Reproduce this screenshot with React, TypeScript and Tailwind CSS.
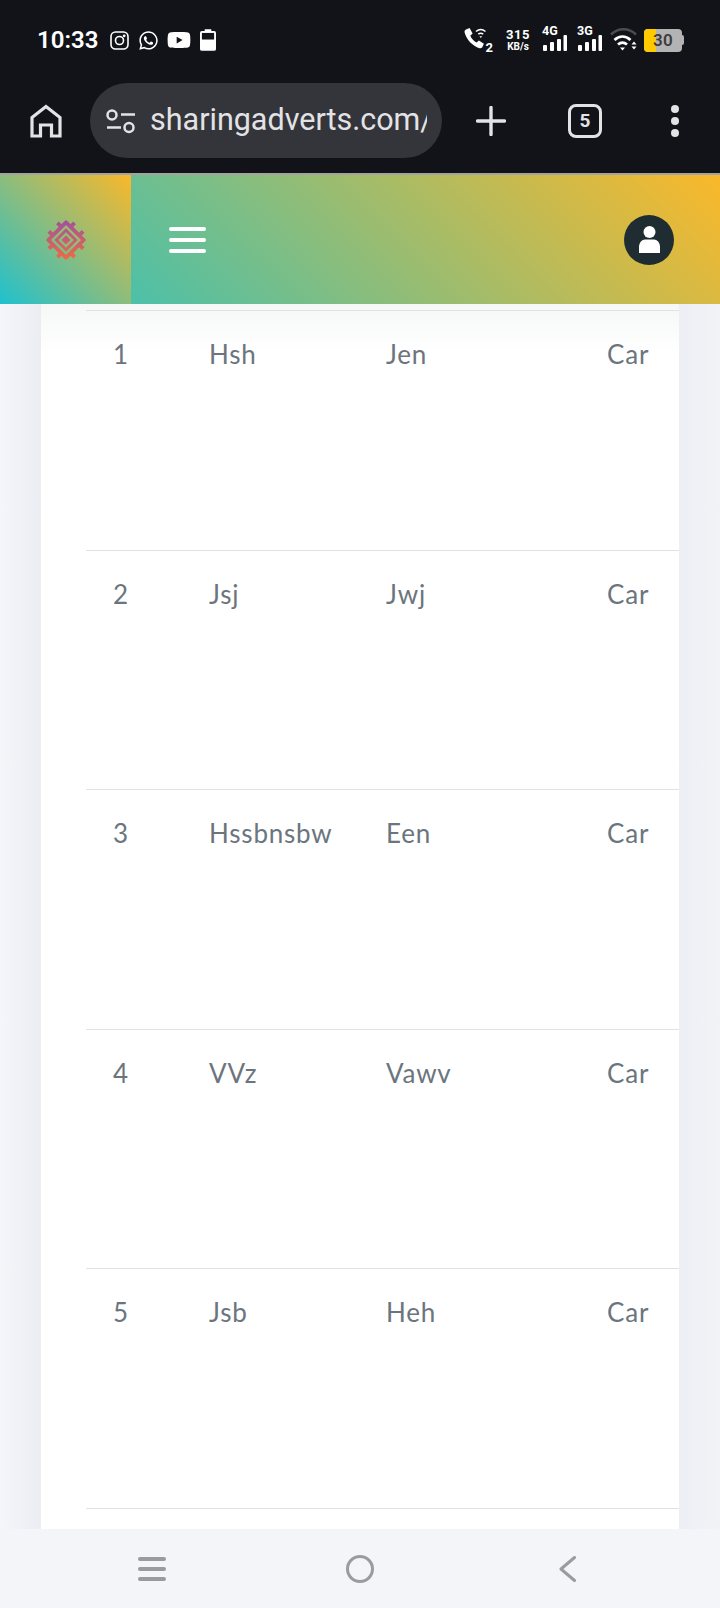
import React from "react";
import { FaWhatsapp, FaYoutube } from "react-icons/fa";

const rows = [
  ["1", "Hsh", "Jen", "Car"],
  ["2", "Jsj", "Jwj", "Car"],
  ["3", "Hssbnsbw", "Een", "Car"],
  ["4", "VVz", "Vawv", "Car"],
  ["5", "Jsb", "Heh", "Car"],
];

function Bars({ label }: { label: string }) {
  return (
    <div className="relative w-[26px] h-[24px]">
      <span className="absolute left-0 top-[-3px] text-[12.5px] leading-[12px] font-bold text-white">{label}</span>
      <svg className="absolute left-0 top-0" width="26" height="24" viewBox="0 0 26 24" fill="#fff">
        <rect x="1" y="17" width="4" height="6" rx="1" />
        <rect x="8" y="14" width="4" height="9" rx="1" />
        <rect x="15" y="11" width="4" height="12" rx="1" />
        <rect x="21.500" y="7" width="3.500" height="16" rx="1" />
      </svg>
    </div>
  );
}

export default function App() {
  return (
    <div className="w-[720px] h-[1608px] flex flex-col overflow-hidden bg-[#f1f3f8] font-['Roboto',sans-serif]">
      <div className="bg-[#111318] h-[173px] shrink-0 flex flex-col">
        <div className="h-[83px] shrink-0 flex items-center justify-between pl-[37px] pr-[36px] pb-[3px]">
          <div className="flex items-center">
            <span className="text-white text-[24px] font-semibold leading-none">10:33</span>
            <svg className="ml-[12px]" width="19" height="19" viewBox="0 0 19 19" fill="none" stroke="#fff" strokeWidth="1.6">
              <rect x="1" y="1" width="17" height="17" rx="4.5" />
              <circle cx="9.5" cy="9.5" r="4" />
              <circle cx="14.2" cy="4.8" r="0.6" fill="#fff" />
            </svg>
            <FaWhatsapp className="ml-[9px] text-white" size={21} />
            <FaYoutube className="ml-[8px] text-white" size={24} />
            <svg className="ml-[9px]" width="16" height="22" viewBox="0 0 17 23">
              <path d="M5 0h7v2h3a2 2 0 0 1 2 2v17a2 2 0 0 1-2 2H2a2 2 0 0 1-2-2V4a2 2 0 0 1 2-2h3z" fill="#fff" />
              <rect x="2" y="4" width="13" height="7" fill="#111318" />
            </svg>
          </div>
          <div className="flex items-center">
            <svg width="30" height="26" viewBox="0 0 30 26" fill="none">
              <path d="M3 2.500l3.600-1.500 3 5.500-2.300 2.300c1 2.600 3.400 5.400 6.300 6.800l2.300-2.100 5 3.200-1.600 3.600c-.6.900-1.700 1.200-2.800.9C9.500 19 3.400 12.500 1.600 5.500c-.3-1.200.3-2.400 1.400-3z" fill="#fff" />
              <path d="M13 4.500c3-2.600 6.500-2.600 9.500 0M15.300 7.200c1.600-1.300 3.300-1.300 4.900 0" stroke="#fff" strokeWidth="1.500" />
              <path d="M16.400 9.200h2.800l-1.400 1.800z" fill="#fff" />
            </svg>
            <span className="text-white text-[13px] font-bold leading-none self-end -ml-[7px] mb-[-1px]">2</span>
            <div className="ml-[12px] w-[26px] flex flex-col items-center text-white font-bold">
              <span className="text-[13px] leading-[13px] tracking-[0.5px]">315</span>
              <span className="text-[10px] leading-[12px]">KB/s</span>
            </div>
            <div className="ml-[11px]"><Bars label="4G" /></div>
            <div className="ml-[9px]"><Bars label="3G" /></div>
            <svg className="ml-[7px]" width="28" height="26" viewBox="0 0 28 26" fill="none">
              <path d="M1 7.500C8 .5 19 .5 26 7.500" stroke="#4a4c50" strokeWidth="2.500" />
              <path d="M4.500 13c5-4.500 11-4.500 16 0M8 17.500c3-2.500 6-2.500 9 0" stroke="#fff" strokeWidth="2.800" />
              <path d="M10 20.500h5l-2.500 3z" fill="#fff" />
              <path d="M21.500 17.500l2.500-3 2.500 3zM21.500 19.500h5l-2.500 3z" fill="#fff" />
            </svg>
            <div className="ml-[6px] relative w-[38px] h-[23px] rounded-[4px] bg-[#b3b3b3] overflow-hidden flex items-center">
              <div className="w-[12px] h-full bg-[#ffc900]" />
              <span className="absolute left-[9px] text-[17px] font-semibold text-[#3d3d3d] leading-none tracking-[0.3px]">30</span>
            </div>
            <div className="w-[2px] h-[10px] bg-[#b3b3b3] rounded-r-[2px]" />
          </div>
        </div>
        <div className="h-[75px] shrink-0 flex items-center pl-[30px]">
          <svg width="32" height="34" viewBox="0 0 32 34" fill="none" stroke="#e3e3e6" strokeWidth="3.200">
            <path d="M2 32V13.500L16 2.500l14 11V32H21.500V21h-11v11z" strokeLinejoin="miter" />
          </svg>
          <div className="ml-[28px] w-[352px] h-[75px] rounded-full bg-[#34353a] flex items-center pl-[16px] pr-[15px]">
            <svg className="shrink-0" width="29" height="26" viewBox="0 0 29 26" fill="none" stroke="#e3e3e6" strokeWidth="2.500">
              <circle cx="6" cy="7" r="4.500" />
              <path d="M15 6.500h14M1 19.500h14" />
              <circle cx="23" cy="19.500" r="4.500" />
            </svg>
            <div className="ml-[15px] overflow-hidden whitespace-nowrap text-[#e3e3e6] text-[30.5px] leading-none">sharingadverts.com/</div>
          </div>
          <svg className="ml-[34px]" width="30" height="30" viewBox="0 0 30 30" stroke="#e3e3e6" strokeWidth="3.400" strokeLinecap="round">
            <path d="M15 1.500v27M1.500 15h27" />
          </svg>
          <div className="ml-[62px] w-[34px] h-[34px] rounded-[8px] border-[3px] border-[#e3e3e6] flex items-center justify-center text-[#e3e3e6] text-[19px] font-bold leading-none">5</div>
          <div className="ml-[69px] flex flex-col gap-[4px]">
            <span className="w-[8px] h-[8px] rounded-full bg-[#e3e3e6]" />
            <span className="w-[8px] h-[8px] rounded-full bg-[#e3e3e6]" />
            <span className="w-[8px] h-[8px] rounded-full bg-[#e3e3e6]" />
          </div>
        </div>
      </div>

      <div className="h-[131px] shrink-0 flex border-t-2 border-[#6f7069]/60">
        <div className="w-[131px] h-full shrink-0 flex items-center justify-center bg-[linear-gradient(45deg,#1fc1cf,#fab82a)]">
          <svg width="48" height="48" viewBox="0 0 42 42" fill="none">
            <defs>
              <linearGradient id="lg" gradientUnits="userSpaceOnUse" x1="21" y1="3" x2="21" y2="39">
                <stop offset="0" stopColor="#a04f9f" />
                <stop offset="1" stopColor="#f06c40" />
              </linearGradient>
            </defs>
            <path d="M21 5.500L36.500 21 21 36.500 5.500 21z" stroke="url(#lg)" strokeWidth="3.400" strokeLinejoin="round" />
            <path d="M21 12.500l8.500 8.500-8.500 8.500-8.500-8.500z" stroke="url(#lg)" strokeWidth="2.400" />
            <path d="M21 17l4 4-4 4-4-4z" fill="url(#lg)" />
            <path d="M17 9.500l-3.500-3.500M9.500 17L6 13.500M25 9.500L28.500 6M32.500 17L36 13.500M17 32.500L13.500 36M9.500 25L6 28.500M25 32.500l3.500 3.500M32.500 25l3.500 3.500" stroke="url(#lg)" strokeWidth="3.400" />
          </svg>
        </div>
        <div className="flex-1 flex items-center justify-between pl-[38px] pr-[46px] bg-[linear-gradient(45deg,#4cc0a9,#fab82a)]">
          <div className="flex flex-col gap-[7px]">
            <span className="w-[37px] h-[4px] rounded-full bg-white" />
            <span className="w-[37px] h-[4px] rounded-full bg-white" />
            <span className="w-[37px] h-[4px] rounded-full bg-white" />
          </div>
          <div className="w-[50px] h-[50px] rounded-full bg-[#1f2d33] flex items-center justify-center">
            <svg width="21" height="27" viewBox="0 0 21 27" fill="#fff">
              <circle cx="10.500" cy="6" r="6" />
              <path d="M0 27v-6c0-4.500 3-7.500 6-7.500h9c3 0 6 3 6 7.500v6z" />
            </svg>
          </div>
        </div>
      </div>

      <div className="flex-1 min-h-0 px-[41px] bg-[linear-gradient(to_right,#f5f6fa_0px,#ecedf2_41px,#eeeff4_679px,#f2f3f7_720px)]">
        <div className="h-full bg-[linear-gradient(to_bottom,#f6f7f7_0px,#ffffff_50px)] pl-[45px] pt-[6px] overflow-hidden">
          {rows.map((r) => (
            <div key={r[0]} className="h-[239.5px] border-t border-[#dee2e6] grid grid-cols-[96px_177px_221px_1fr] pt-[25px] pl-[27px] text-[26px] leading-[36px] tracking-[0.8px] text-[#6c757d] font-['Lato',sans-serif]">
              {r.map((c, i) => (
                <span key={i}>{c}</span>
              ))}
            </div>
          ))}
          <div className="border-t border-[#dee2e6]" />
        </div>
      </div>

      <div className="h-[79px] shrink-0 bg-[#f3f5f9] flex items-center pl-[138px]">
        <div className="flex flex-col gap-[6px]">
          <span className="w-[28px] h-[4px] rounded-full bg-[#9a9b9d]" />
          <span className="w-[28px] h-[4px] rounded-full bg-[#9a9b9d]" />
          <span className="w-[28px] h-[4px] rounded-full bg-[#9a9b9d]" />
        </div>
        <div className="ml-[180px] w-[28px] h-[28px] rounded-full border-[3.5px] border-[#9a9b9d]" />
        <svg className="ml-[185px]" width="17" height="26" viewBox="0 0 17 26" fill="none" stroke="#9a9b9d" strokeWidth="3" strokeLinecap="round" strokeLinejoin="round">
          <path d="M15.500 1.500L2 13l13.500 11.500" />
        </svg>
      </div>
    </div>
  );
}
